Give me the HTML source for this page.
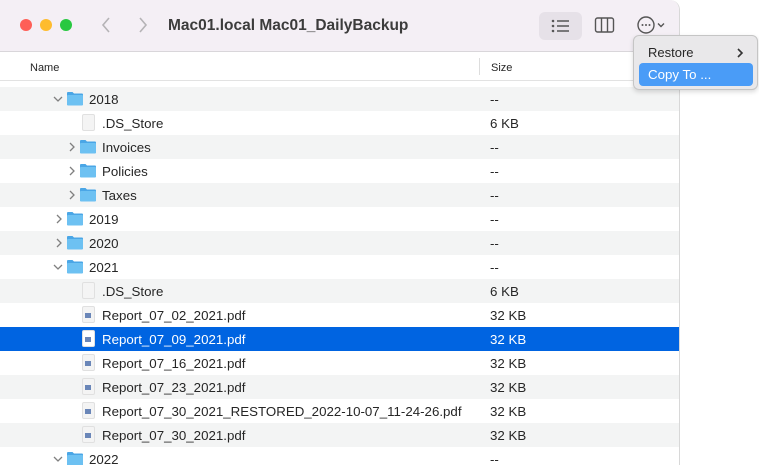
<!DOCTYPE html><html><head><style>
*{margin:0;padding:0;box-sizing:border-box}
body{width:759px;height:465px;background:#fff;position:relative;overflow:hidden;font-family:"Liberation Sans",sans-serif;font-size:13.3px;color:#262626}
.win{position:absolute;left:0;top:0;width:680px;height:465px;border-right:1px solid #d8d8d8;border-radius:0 10px 0 0;overflow:hidden;background:#fff}
.tb{position:absolute;left:0;top:0;width:680px;height:52px;background:#f4eff5;border-bottom:1px solid #d9d6da}
.dot{position:absolute;top:19px;width:12px;height:12px;border-radius:50%}
.title{position:absolute;left:168px;top:17px;font-size:15.5px;font-weight:bold;color:#3c3c3c}
.hdr{position:absolute;top:52px;left:0;width:680px;height:29px;border-bottom:1px solid #e2e2e2;font-size:11px}
.row{position:absolute;left:0;width:679px;height:24px;line-height:25px}
.g{background:#f3f4f4}
.sel{background:#0064e1;color:#fff}
.row span{position:absolute}
.sz{left:490px}
.chev{position:absolute;top:7px}
.fold{position:absolute;top:4px;width:18px;height:15px}
.file{position:absolute;top:3px;width:13px;height:17px;border-radius:2px}
.menu{position:absolute;left:633px;top:35px;width:125px;height:55px;background:#e9e8ea;border:1px solid #c5c5c5;border-radius:6px;box-shadow:0 2px 5px rgba(0,0,0,.15)}
</style></head><body>
<div class="win">
<div class="tb">
<div class="dot" style="left:20px;background:#fe5f57"></div>
<div class="dot" style="left:40px;background:#febc2e"></div>
<div class="dot" style="left:60px;background:#28c840"></div>
<svg style="position:absolute;left:100px;top:15px" width="12" height="20"><path d="M9 3L3 10L9 17" fill="none" stroke="#b5b3b6" stroke-width="1.6"/></svg>
<svg style="position:absolute;left:137px;top:15px" width="12" height="20"><path d="M3 3L9 10L3 17" fill="none" stroke="#b5b3b6" stroke-width="1.6"/></svg>
<div class="title">Mac01.local Mac01_DailyBackup</div>
<div style="position:absolute;left:539px;top:12px;width:43px;height:28px;background:#e6e1e8;border-radius:6px"></div>
<svg style="position:absolute;left:550px;top:18px" width="22" height="16"><g fill="#555" stroke="#555" stroke-width="1.4"><circle cx="3" cy="3" r=".6"/><circle cx="3" cy="8" r=".6"/><circle cx="3" cy="13" r=".6"/><path d="M7 3H19M7 8H19M7 13H19"/></g></svg>
<svg style="position:absolute;left:594px;top:16px" width="22" height="18"><rect x="1.5" y="2" width="18" height="14" rx="2" fill="none" stroke="#555" stroke-width="1.4"/><path d="M7.5 2V16M13.5 2V16" stroke="#555" stroke-width="1.4"/></svg>
<svg style="position:absolute;left:637px;top:15px" width="32" height="20"><circle cx="9" cy="10" r="8" fill="none" stroke="#555" stroke-width="1.4"/><g fill="#555"><circle cx="5.5" cy="10" r="1"/><circle cx="9" cy="10" r="1"/><circle cx="12.5" cy="10" r="1"/></g><path d="M21 8.5L24 11.5L27 8.5" fill="none" stroke="#555" stroke-width="1.4"/></svg>
</div>
<div class="hdr"><span style="position:absolute;left:30px;top:10px">Name</span><span style="position:absolute;left:491px;top:10px">Size</span><div style="position:absolute;left:479px;top:6px;width:1px;height:17px;background:#ddd"></div></div>
<div id="rows"></div>
</div>
<div class="menu">
<div style="position:absolute;left:14px;top:9px;font-size:13px;color:#262626">Restore</div>
<svg style="position:absolute;left:101px;top:11px" width="10" height="12"><path d="M3 2L7 6L3 10" fill="none" stroke="#333" stroke-width="1.6"/></svg>
<div style="position:absolute;left:5px;top:27px;width:114px;height:23px;background:#4a9cf7;border-radius:4px;color:#fff;line-height:23px;padding-left:9px">Copy To ...</div>
</div>
<script>
var data=[[0,'f','2018','--','d'],[1,'x','.DS_Store','6 KB'],[1,'f','Invoices','--','r'],[1,'f','Policies','--','r'],[1,'f','Taxes','--','r'],[0,'f','2019','--','r'],[0,'f','2020','--','r'],[0,'f','2021','--','d'],[1,'x','.DS_Store','6 KB'],[1,'p','Report_07_02_2021.pdf','32 KB'],[1,'p','Report_07_09_2021.pdf','32 KB'],[1,'p','Report_07_16_2021.pdf','32 KB'],[1,'p','Report_07_23_2021.pdf','32 KB'],[1,'p','Report_07_30_2021_RESTORED_2022-10-07_11-24-26.pdf','32 KB'],[1,'p','Report_07_30_2021.pdf','32 KB'],[0,'f','2022','--','d']];
var h='';
data.forEach(function(d,i){var y=87+i*24;var cls='row'+(i==10?' sel':(i%2==0?' g':''));
var lv=d[0]*13;var s='<div class="'+cls+'" style="top:'+y+'px">';
var c=i==10?'#fff':'#808080';
if(d[4]=='d')s+='<svg class="chev" style="left:'+(52+lv)+'px" width="12" height="10"><path d="M2 3L6 7L10 3" fill="none" stroke="'+c+'" stroke-width="1.3"/></svg>';
if(d[4]=='r')s+='<svg class="chev" style="left:'+(54+lv)+'px" width="10" height="12"><path d="M3 1L7 5L3 9" fill="none" stroke="'+c+'" stroke-width="1.3"/></svg>';
if(d[1]=='f')s+='<svg class="fold" style="left:'+(66+lv)+'px" viewBox="0 0 18 15"><path d="M1 2Q1 1 2 1H6.5L8 2.5H16Q17 2.5 17 3.5V14H1Z" fill="#4aa6e6"/><rect x="1" y="4" width="16" height="10.5" rx="1" fill="#6dc1f2"/></svg>';
else{var bg=i==10?'#fff':'#f4f4f4';s+='<div class="file" style="left:'+(69+lv)+'px;background:'+bg+';border:1px solid #e0e0e0"></div>';
if(d[1]=='p')s+='<div style="position:absolute;left:'+(72+lv)+'px;top:10px;width:6px;height:5px;background:#6a86b8"></div>';}
s+='<span style="left:'+(89+lv)+'px">'+d[2]+'</span><span class="sz">'+d[3]+'</span></div>';h+=s;});
document.getElementById('rows').innerHTML=h;
</script>
</body></html>
